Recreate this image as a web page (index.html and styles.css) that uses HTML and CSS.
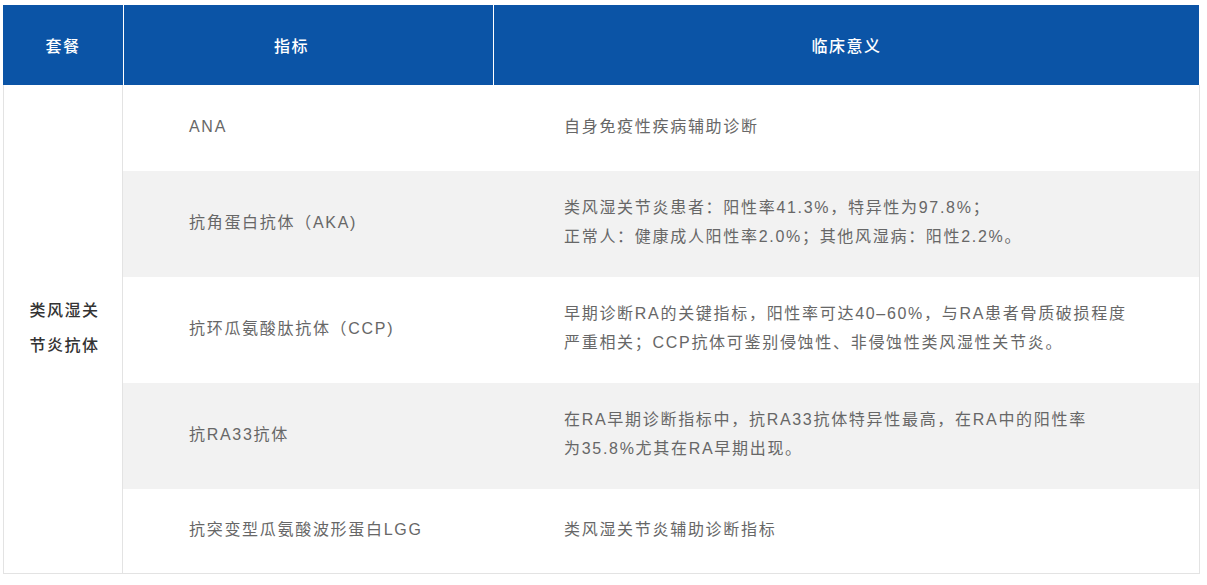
FILE: index.html
```html
<!DOCTYPE html>
<html lang="zh-CN">
<head>
<meta charset="utf-8">
<title>类风湿关节炎抗体</title>
<link rel="stylesheet" href="styles.css">
</head>
<body>
<div class="wrap">
  <table class="grid">
    <colgroup>
      <col class="c1">
      <col class="c2">
      <col class="c3">
    </colgroup>
    <thead>
      <tr class="head-row">
        <th class="h1">套餐</th>
        <th class="h2">指标</th>
        <th class="h3">临床意义</th>
      </tr>
    </thead>
    <tbody>
      <tr class="r-a">
        <td class="pkg" rowspan="5"><span class="pkg-text">类风湿关节炎抗体</span></td>
        <td class="ind">ANA</td>
        <td class="mean">自身免疫性疾病辅助诊断</td>
      </tr>
      <tr class="r-b alt">
        <td class="ind">抗角蛋白抗体（AKA)</td>
        <td class="mean">类风湿关节炎患者：阳性率41.3%，特异性为97.8%；<br>正常人：健康成人阳性率2.0%；其他风湿病：阳性2.2%。</td>
      </tr>
      <tr class="r-b">
        <td class="ind">抗环瓜氨酸肽抗体（CCP)</td>
        <td class="mean">早期诊断RA的关键指标，阳性率可达40–60%，与RA患者骨质破损程度<br>严重相关；CCP抗体可鉴别侵蚀性、非侵蚀性类风湿性关节炎。</td>
      </tr>
      <tr class="r-b alt">
        <td class="ind">抗RA33抗体</td>
        <td class="mean">在RA早期诊断指标中，抗RA33抗体特异性最高，在RA中的阳性率<br>为35.8%尤其在RA早期出现。</td>
      </tr>
      <tr class="r-c">
        <td class="ind last">抗突变型瓜氨酸波形蛋白LGG</td>
        <td class="mean last">类风湿关节炎辅助诊断指标</td>
      </tr>
    </tbody>
  </table>
</div>
</body>
</html>
```

FILE: styles.css
```css
html, body {
  margin: 0;
  padding: 0;
  background: #ffffff;
}

body {
  font-family: "Liberation Sans", "Noto Sans CJK SC", "Noto Sans", sans-serif;
  font-size: 16px;
  letter-spacing: 1.7px;
  color: #676767;
}

.wrap {
  padding: 5px 0 0 3px;
}

.grid {
  width: 1197px;
  table-layout: fixed;
  border-collapse: separate;
  border-spacing: 0;
}

.c1 { width: 120px; }
.c2 { width: 370px; }
.c3 { width: 707px; }

.head-row { height: 80px; }

.grid th {
  padding: 0;
  background: #0b54a6;
  color: #ffffff;
  font-family: "Noto Sans CJK SC", sans-serif;
  font-weight: 500;
  font-size: 16px;
  letter-spacing: 1.5px;
  text-align: center;
  vertical-align: middle;
}

.grid th.h2,
.grid th.h3 {
  border-left: 1px solid #ffffff;
}

.grid th.h2 {
  padding-right: 34px;
}

.grid th.h3 {
  border-right: 1px solid #ffffff;
}

.grid td {
  padding: 0 0 4px 0;
  vertical-align: middle;
  line-height: 29px;
  white-space: nowrap;
}

.r-a { height: 86px; }
.r-b { height: 106px; }
.r-c { height: 85px; }

.alt td.ind,
.alt td.mean {
  background: #f2f2f2;
}

.grid td.pkg {
  padding: 0 0 4px 5px;
  border-left: 1px solid #e3e3e3;
  border-right: 1px solid #e3e3e3;
  border-bottom: 1px solid #e3e3e3;
  text-align: center;
  color: #333333;
  font-family: "Noto Sans CJK SC", sans-serif;
  font-weight: 500;
}

.pkg-text {
  display: inline-block;
  width: 72px;
  white-space: normal;
  line-height: 35px;
  letter-spacing: 1.5px;
  text-align: left;
}

.grid td.ind {
  padding-left: 66px;
}

.grid td.mean {
  padding-left: 71px;
  border-right: 1px solid #e3e3e3;
}

.grid td.last {
  border-bottom: 1px solid #e3e3e3;
}
```
